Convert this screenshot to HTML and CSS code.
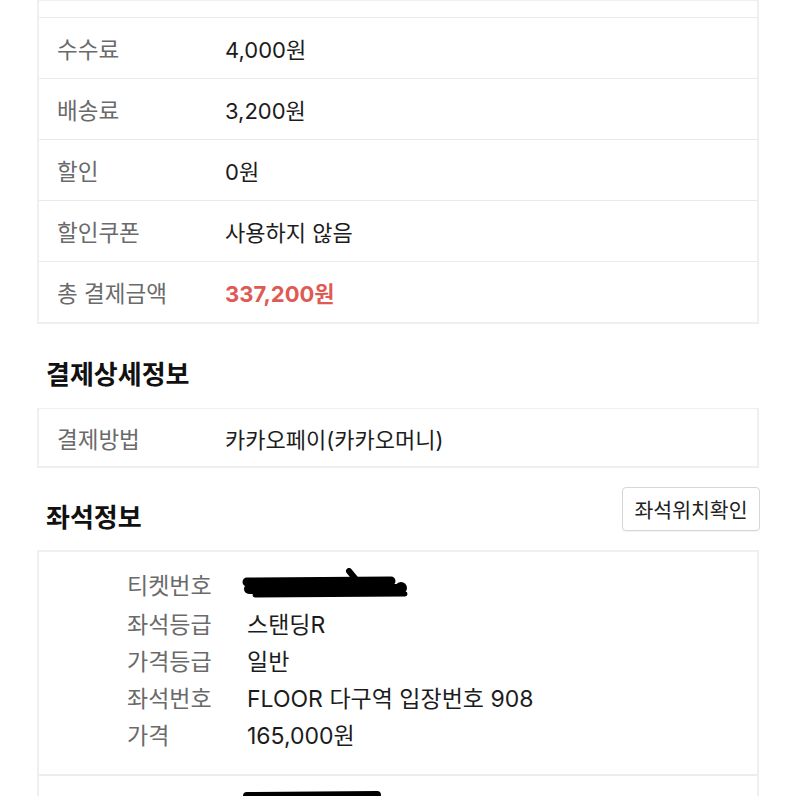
FILE: index.html
```html
<!DOCTYPE html>
<html lang="ko">
<head>
    <meta charset="UTF-8">
    <meta name="viewport" content="width=device-width, initial-scale=1.0">
    <title>예매상세</title>
    <link rel="stylesheet" href="styles.css">
</head>
<body>
    <div class="page">
        <div class="info-table price-table">
            <div class="info-row cut"></div>
            <div class="info-row">
                <span class="info-label">수수료</span>
                <span class="info-value">4,000원</span>
            </div>
            <div class="info-row">
                <span class="info-label">배송료</span>
                <span class="info-value">3,200원</span>
            </div>
            <div class="info-row">
                <span class="info-label">할인</span>
                <span class="info-value">0원</span>
            </div>
            <div class="info-row">
                <span class="info-label">할인쿠폰</span>
                <span class="info-value">사용하지 않음</span>
            </div>
            <div class="info-row">
                <span class="info-label">총 결제금액</span>
                <span class="info-value total">337,200원</span>
            </div>
        </div>

        <div class="section-title">
            <h2>결제상세정보</h2>
        </div>
        <div class="info-table">
            <div class="info-row single">
                <span class="info-label">결제방법</span>
                <span class="info-value">카카오페이(카카오머니)</span>
            </div>
        </div>

        <div class="section-title seat-title">
            <h2>좌석정보</h2>
            <button type="button" class="btn">좌석위치확인</button>
        </div>
        <div class="seat-box">
            <div class="seat-item">
                <div class="seat-line first">
                    <span class="seat-label">티켓번호</span>
                    <span class="seat-value redacted">
                        <svg width="172" height="32" viewBox="0 0 172 32">
                            <path d="M6 14 L150 13" stroke="#000" stroke-width="9" stroke-linecap="round" fill="none"/>
                            <path d="M8 21 L160 21" stroke="#000" stroke-width="10" stroke-linecap="round" fill="none"/>
                            <path d="M14 27 L164 26" stroke="#000" stroke-width="5" stroke-linecap="round" fill="none"/>
                            <path d="M108 3 L117 14" stroke="#000" stroke-width="6" stroke-linecap="round" fill="none"/>
                            <circle cx="160" cy="20" r="6" fill="#000"/>
                        </svg>
                    </span>
                </div>
                <div class="seat-line">
                    <span class="seat-label">좌석등급</span>
                    <span class="seat-value">스탠딩R</span>
                </div>
                <div class="seat-line">
                    <span class="seat-label">가격등급</span>
                    <span class="seat-value">일반</span>
                </div>
                <div class="seat-line">
                    <span class="seat-label">좌석번호</span>
                    <span class="seat-value">FLOOR 다구역 입장번호 908</span>
                </div>
                <div class="seat-line">
                    <span class="seat-label">가격</span>
                    <span class="seat-value">165,000원</span>
                </div>
            </div>
            <div class="seat-item">
                <div class="seat-line">
                    <span class="seat-label"></span>
                    <span class="seat-value redacted">
                        <svg width="172" height="30" viewBox="0 0 172 30">
                            <path d="M6 8 L136 7" stroke="#000" stroke-width="8" stroke-linecap="round" fill="none"/>
                            <path d="M8 16 L150 16" stroke="#000" stroke-width="9" stroke-linecap="round" fill="none"/>
                        </svg>
                    </span>
                </div>
            </div>
        </div>
    </div>
</body>
</html>
```

FILE: styles.css
```css
* {
    margin: 0;
    padding: 0;
    box-sizing: border-box;
}

body {
    background-color: #fff;
    color: #222;
    font-family: Inter, "Noto Sans CJK KR", sans-serif;
    overflow: hidden;
}

.page {
    padding: 0 37px;
    width: 796px;
}

.info-table {
    border: 2px solid #efefef;
    border-top-width: 1px;
}

.info-row {
    display: flex;
    align-items: center;
    height: 61px;
    padding-left: 18px;
    border-top: 1px solid #e9e9e9;
}

.info-row:first-child {
    border-top: none;
}

.info-row.cut {
    height: 16px;
}

.info-row.single {
    height: 57px;
}

.info-label {
    width: 168px;
    font-size: 22.5px;
    color: #6a6a6a;
}

.info-value {
    font-size: 22px;
    color: #1c1c1c;
}

.info-value.total {
    color: #e05a55;
    font-weight: 700;
}

.section-title {
    display: flex;
    justify-content: space-between;
    align-items: flex-start;
    height: 84px;
    padding: 33px 0 0 9px;
}

.section-title h2 {
    font-size: 26px;
    line-height: 36px;
    font-weight: 700;
    color: #111;
}

.seat-title {
    height: 82px;
    padding-top: 32px;
}

.btn {
    font-family: Inter, "Noto Sans CJK KR", sans-serif;
    font-size: 20.5px;
    color: #222;
    background-color: #fff;
    border: 1px solid #d6d6d6;
    border-radius: 4px;
    width: 138px;
    height: 44px;
    margin-top: -13px;
    margin-right: -1px;
    box-shadow: 0 1px 1px rgba(0, 0, 0, 0.05);
}

.seat-box {
    border: 2px solid #efefef;
    border-bottom: none;
}

.seat-item {
    padding: 11px 0 22px 88px;
}

.seat-item + .seat-item {
    border-top: 2px solid #ededed;
    padding-top: 8px;
}

.seat-line {
    display: flex;
    align-items: center;
    height: 37px;
}

.seat-line.first {
    height: 41px;
}

.seat-label {
    width: 120px;
    font-size: 23px;
    color: #6a6a6a;
}

.seat-value {
    font-size: 23px;
    color: #1c1c1c;
}

.redacted {
    display: flex;
    align-items: center;
    margin-left: -6px;
}
```
